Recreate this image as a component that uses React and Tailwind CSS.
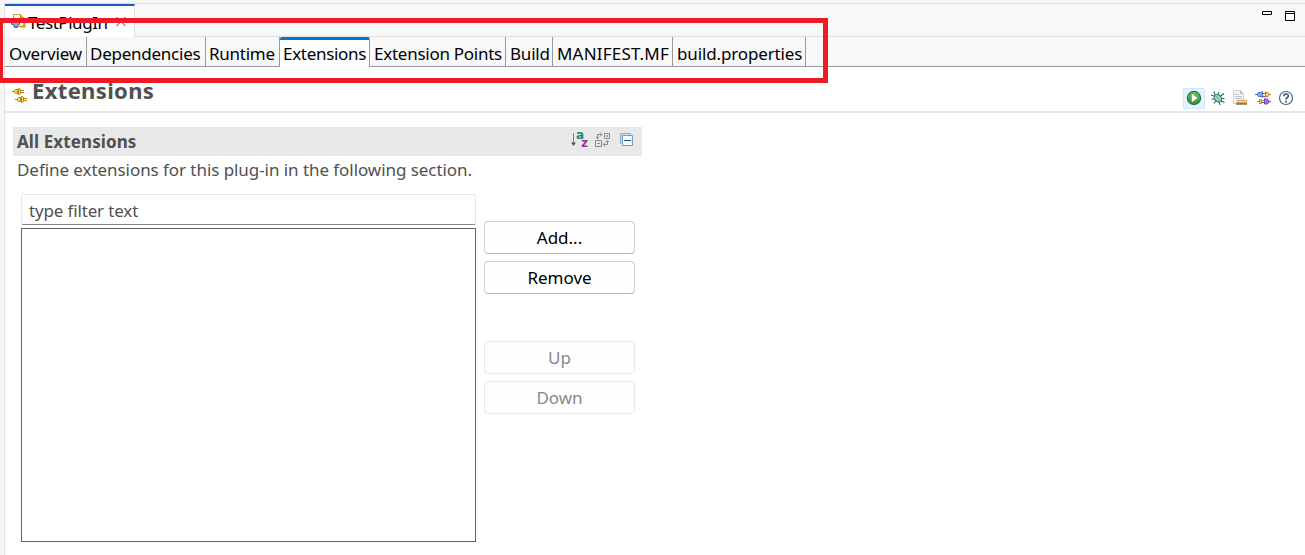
import React from "react";

const pageTabs = [
  { label: "Overview", box: "w-[82px] pl-1", text: "tracking-[-0.15px]" },
  { label: "Dependencies", box: "w-[119px] pl-[3px]", text: "tracking-[-0.25px]" },
  { label: "Runtime", box: "w-[74px] pl-[3px]", text: "tracking-[-0.25px]" },
  { label: "Extensions", box: "w-[90px] pl-[3px]", text: "tracking-[-0.3px]", active: true },
  { label: "Extension Points", box: "w-[136px] pl-1", text: "tracking-[-0.26px]" },
  { label: "Build", box: "w-[47px] pl-1", text: "tracking-[-0.2px]" },
  { label: "MANIFEST.MF", box: "w-[120px] pl-1", text: "tracking-[0.2px]" },
  { label: "build.properties", box: "w-[133px] pl-1", text: "tracking-[-0.14px]" },
];

function PluginFileIcon() {
  return (
    <svg width="16" height="16" viewBox="0 0 16 16" className="mb-[3px] shrink-0">
      <path d="M2.500.500h7l3.500 3.500v8.500H2.500z" fill="#fdf3d8" stroke="#c0a060" />
      <path d="M9.500.500V4H13" fill="#e9b94c" stroke="#b88a2c" />
      <path d="M8 5.500h2.500v2M9 12.500h4.500v-5" stroke="#d39a22" strokeWidth="2" fill="none" />
      <path d="M.500 7.500h2v-2h2v3h1v-3h2v2h1v3l-2 1v2h-3v-2l-2-1H.500z" fill="#86a4df" stroke="#3f63b2" />
      <path d="M9.500 9.500h2v2h-2z" fill="#fff" />
    </svg>
  );
}

function ExtensionsIcon() {
  return (
    <svg width="16" height="16" viewBox="0 0 16 16" className="shrink-0">
      <g id="plug">
        <path d="M0 4.500h2M8 3.500h4M8 5.500h4" stroke="#b88408" />
        <path d="M3.500 2.500h2v4h-2l-1-1v-2z" fill="#f9dc80" stroke="#b88408" />
        <path d="M6.500 1.500h1l1 1v4l-1 1h-1z" fill="#f9dc80" stroke="#b88408" />
      </g>
      <use href="#plug" x="3" y="8" />
    </svg>
  );
}

function RunIcon() {
  return (
    <svg width="16" height="16" viewBox="0 0 16 16" className="shrink-0">
      <defs>
        <linearGradient id="run" x1="0" y1="0" x2="0" y2="1">
          <stop offset="0" stopColor="#6cc06c" />
          <stop offset="1" stopColor="#2f9140" />
        </linearGradient>
      </defs>
      <circle cx="8" cy="8" r="6.600" fill="url(#run)" stroke="#257a35" strokeWidth="1.200" />
      <path d="M5.800 3.800v8.400L11.500 8z" fill="#fff" />
    </svg>
  );
}

function BugIcon() {
  return (
    <svg width="16" height="16" viewBox="0 0 16 16">
      <path
        d="M5 5L4 1.500M8 4.500L9 2M5 6.500L1 5M5 9H1.500M6 11l-2 2.500M9 12l1 3M11 11l3.500 1.500M11 8.500h3.500M10.500 6L14 3.500"
        stroke="#2c6860"
        strokeWidth="1.100"
        fill="none"
      />
      <ellipse cx="8" cy="8.300" rx="3.200" ry="4.200" fill="#a4d8ae" stroke="#2d7466" transform="rotate(-42 8 8.300)" />
      <path d="M6 6l4 5" stroke="#5da488" strokeWidth=".8" />
    </svg>
  );
}

function ExportIcon() {
  return (
    <svg width="16" height="16" viewBox="0 0 16 16">
      <path d="M1.500.500h7l3 3v10h-10z" fill="#f3f4f8" stroke="#d2d0d0" />
      <path d="M8.500.500v3h3" fill="#e8d9bc" stroke="#cdb88f" />
      <path d="M3 4.500h4M3 6.500h7M3 8.500h7" stroke="#b9c4da" />
      <path d="M5 10h10v4H4z" fill="#e0aa5e" />
      <path d="M5 11.500h10" stroke="#f4d297" />
      <path d="M4 14h11" stroke="#7c4a20" strokeWidth="1.200" />
    </svg>
  );
}

function ManifestPlugsIcon() {
  return (
    <svg width="16" height="16" viewBox="0 0 16 16">
      <path d="M0 4.500h3M3.500 2.500H6L7.500 1.500v6L6 6.500H3.500l-1-1v-2z" fill="#86a9df" stroke="#4671b8" />
      <path d="M8 3.500h2M8 6.500h2" stroke="#4671b8" />
      <path d="M10.500 1.500v6M11 2.500h2l1 1v2l-1 1h-2M14 4.500h2" fill="#f4cb5b" stroke="#bd8a18" />
      <path d="M2 11.500h2M4.500 9.500h2v4h-2zM9 10.500h-2" fill="#f4cb5b" stroke="#c18d1c" />
      <path d="M7 12.500h2M9.500 8.500l1 .5h1.500l1.500 1v3L12 14H9.500zM13.500 11.500H16" fill="#a877d4" stroke="#7445ae" />
    </svg>
  );
}

function HelpIcon() {
  return (
    <svg width="16" height="16" viewBox="0 0 16 16">
      <circle cx="8" cy="8" r="6.500" fill="#fff" stroke="#4b6385" strokeWidth="1.200" />
      <path d="M5.800 6.300c0-3 4.500-3 4.500-.4C10.300 7.500 8 7.500 8 9.500" fill="none" stroke="#40587b" strokeWidth="1.700" />
      <path d="M7.100 10.700h1.800v1.700H7.100z" fill="#40587b" />
    </svg>
  );
}

function SortIcon() {
  return (
    <div className="flex h-4 w-4">
      <svg width="6" height="16" viewBox="0 0 6 16" className="shrink-0">
        <path d="M2.500 1v12" stroke="#4d8aba" />
        <path d="M0 10.500h5L2.500 14z" fill="#315f88" />
      </svg>
      <div className="relative h-4 w-[11px] font-['DejaVu_Sans'] text-[12px] font-bold leading-none">
        <span className="absolute left-[-1px] top-[-3px] text-[#168879]">a</span>
        <span className="absolute left-[4px] top-[5px] text-[#8c3d99]">z</span>
      </div>
    </div>
  );
}

function ToggleExpandIcon() {
  return (
    <svg width="16" height="16" viewBox="0 0 16 16" fill="none" stroke="#8b8b8b">
      <path d="M9.500 1.500h5v5h-5zM11 4h2M12 3v2M.5 8.500h6v6h-6zM2 11.500h3" />
      <path d="M2.500 6.500v-4h4M5 .5l2 2-2 2M1 5l1.500 1.500L4 5M12.500 9v3.500h-4M10 10.500l-2 2 2 2M11 10l1.500-1.500L14 10" />
    </svg>
  );
}

function CollapseIcon() {
  return (
    <svg width="16" height="16" viewBox="0 0 16 16">
      <path d="M1.500 1.500h10v10h-10z" fill="#c8dfec" stroke="#8eafc9" />
      <path d="M3.500 3.500h10v10h-10z" fill="#f3fbff" stroke="#759bb9" />
      <path d="M5 8.500h7" stroke="#164d7b" />
    </svg>
  );
}

function PushButton({ children, disabled }) {
  return (
    <button
      disabled={disabled}
      className={
        "flex h-[33px] w-[151px] items-center justify-center rounded-[4px] border bg-[#fefefe] pt-px " +
        (disabled ? "border-[#e8e8e8] text-[#888888]" : "border-[#d0d0d0] border-b-[#b8b8b8] text-black")
      }
    >
      <span>{children}</span>
    </button>
  );
}

export default function App() {
  return (
    <div className="relative flex h-[555px] w-[1305px] flex-col overflow-hidden bg-[#f7f7f7] pt-[3px] font-['Noto_Sans','Open_Sans',sans-serif] text-[17px] leading-6 text-black">
      <div className="ml-1 flex grow flex-col border-l border-t border-[#e0e0e0] bg-[#f8f8f8]">
        <div className="flex h-[33px] shrink-0 border-b border-[#e0e0e0]">
          <div className="flex h-[33px] w-[130px] items-center border-r border-t-2 border-r-[#e0e0e0] border-t-[#185abd] bg-white pl-[6px] pt-[3px]">
            <PluginFileIcon />
            <span className="ml-px w-[80px] whitespace-nowrap tracking-[-0.45px]">TestPlugIn</span>
            <svg width="12" height="12" viewBox="0 0 12 12" className="mb-[2px] ml-[7px]">
              <path d="M1.500 1l9 9M10.500 1l-9 9" stroke="#333" />
            </svg>
          </div>
          <div className="flex grow justify-end gap-[13px] pr-[10px] pt-[7px]">
            <svg width="10" height="4" viewBox="0 0 10 4">
              <path d="M.5.5h9v3h-9z" fill="#fff" stroke="#000" />
            </svg>
            <svg width="10" height="10" viewBox="0 0 10 10">
              <path d="M.5.5h9v9h-9zM0 2.500h10" fill="#fff" stroke="#000" />
            </svg>
          </div>
        </div>

        <nav className="flex h-[30px] shrink-0">
          {pageTabs.map((tab) => (
            <div
              key={tab.label}
              className={
                "flex shrink-0 items-center whitespace-nowrap border-r border-r-[#999999] " +
                tab.box +
                (tab.active
                  ? " rounded-t-[2px] border-t-[3px] border-t-[#0078d7] bg-white pt-px"
                  : " border-b border-b-[#999999] pt-[5px]")
              }
            >
              <span className={tab.text}>{tab.label}</span>
            </div>
          ))}
          <div className="grow rounded-tr-md border-b border-[#999999]" />
        </nav>

        <main className="flex grow flex-col bg-white">
          <header className="flex h-[46px] shrink-0 border-b-2 border-[#e8e8e8] pl-[7px] pr-[11px]">
            <div className="pt-5">
              <ExtensionsIcon />
            </div>
            <h1 className="ml-[4px] grow pt-[11px] text-[22px] font-bold tracking-[0.35px] text-[#505050]">Extensions</h1>
            <div className="mt-5 flex h-[22px] items-center gap-[7px]">
              <div className="flex h-[21px] w-[22px] shrink-0 items-center justify-center rounded-[2px] border border-[#cce8ff] bg-[#e5f3ff]">
                <RunIcon />
              </div>
              <div className="-ml-[2px] -mr-px"><BugIcon /></div>
              <ExportIcon />
              <ManifestPlugsIcon />
              <HelpIcon />
            </div>
          </header>

          <section className="ml-2 mt-[14px] flex w-[629px] flex-col text-[#505050]">
            <div className="flex h-[29px] items-center bg-[#e9e9e9] pl-1 pr-[7px]">
              <h2 className="grow pt-px font-bold tracking-[0.1px]">All Extensions</h2>
              <div className="flex gap-2 pb-[3px]">
                <SortIcon />
                <ToggleExpandIcon />
                <CollapseIcon />
              </div>
            </div>
            <p className="mt-[2px] whitespace-nowrap pl-1 tracking-[-0.06px]">Define extensions for this plug-in in the following section.</p>
            <div className="ml-2 mt-[12px] flex gap-2">
              <div className="flex w-[455px] flex-col gap-[3px]">
                <div className="flex h-[31px] items-center rounded-[2px] border border-[#e8e8e8] border-b-[#868686] pl-[7px] pt-[2px] tracking-[-0.15px]">
                  type filter text
                </div>
                <div className="h-[314px] border border-[#646464]" />
              </div>
              <div className="flex flex-col gap-[7px] pt-[27px]">
                <PushButton>Add...</PushButton>
                <PushButton>Remove</PushButton>
                <div className="h-[33px]" />
                <PushButton disabled>Up</PushButton>
                <PushButton disabled>Down</PushButton>
              </div>
            </div>
          </section>
        </main>
      </div>

      <div className="pointer-events-none absolute left-[-2px] top-[18px] h-[65px] w-[830px] border-[5px] border-[#ed1c24]" />
    </div>
  );
}
